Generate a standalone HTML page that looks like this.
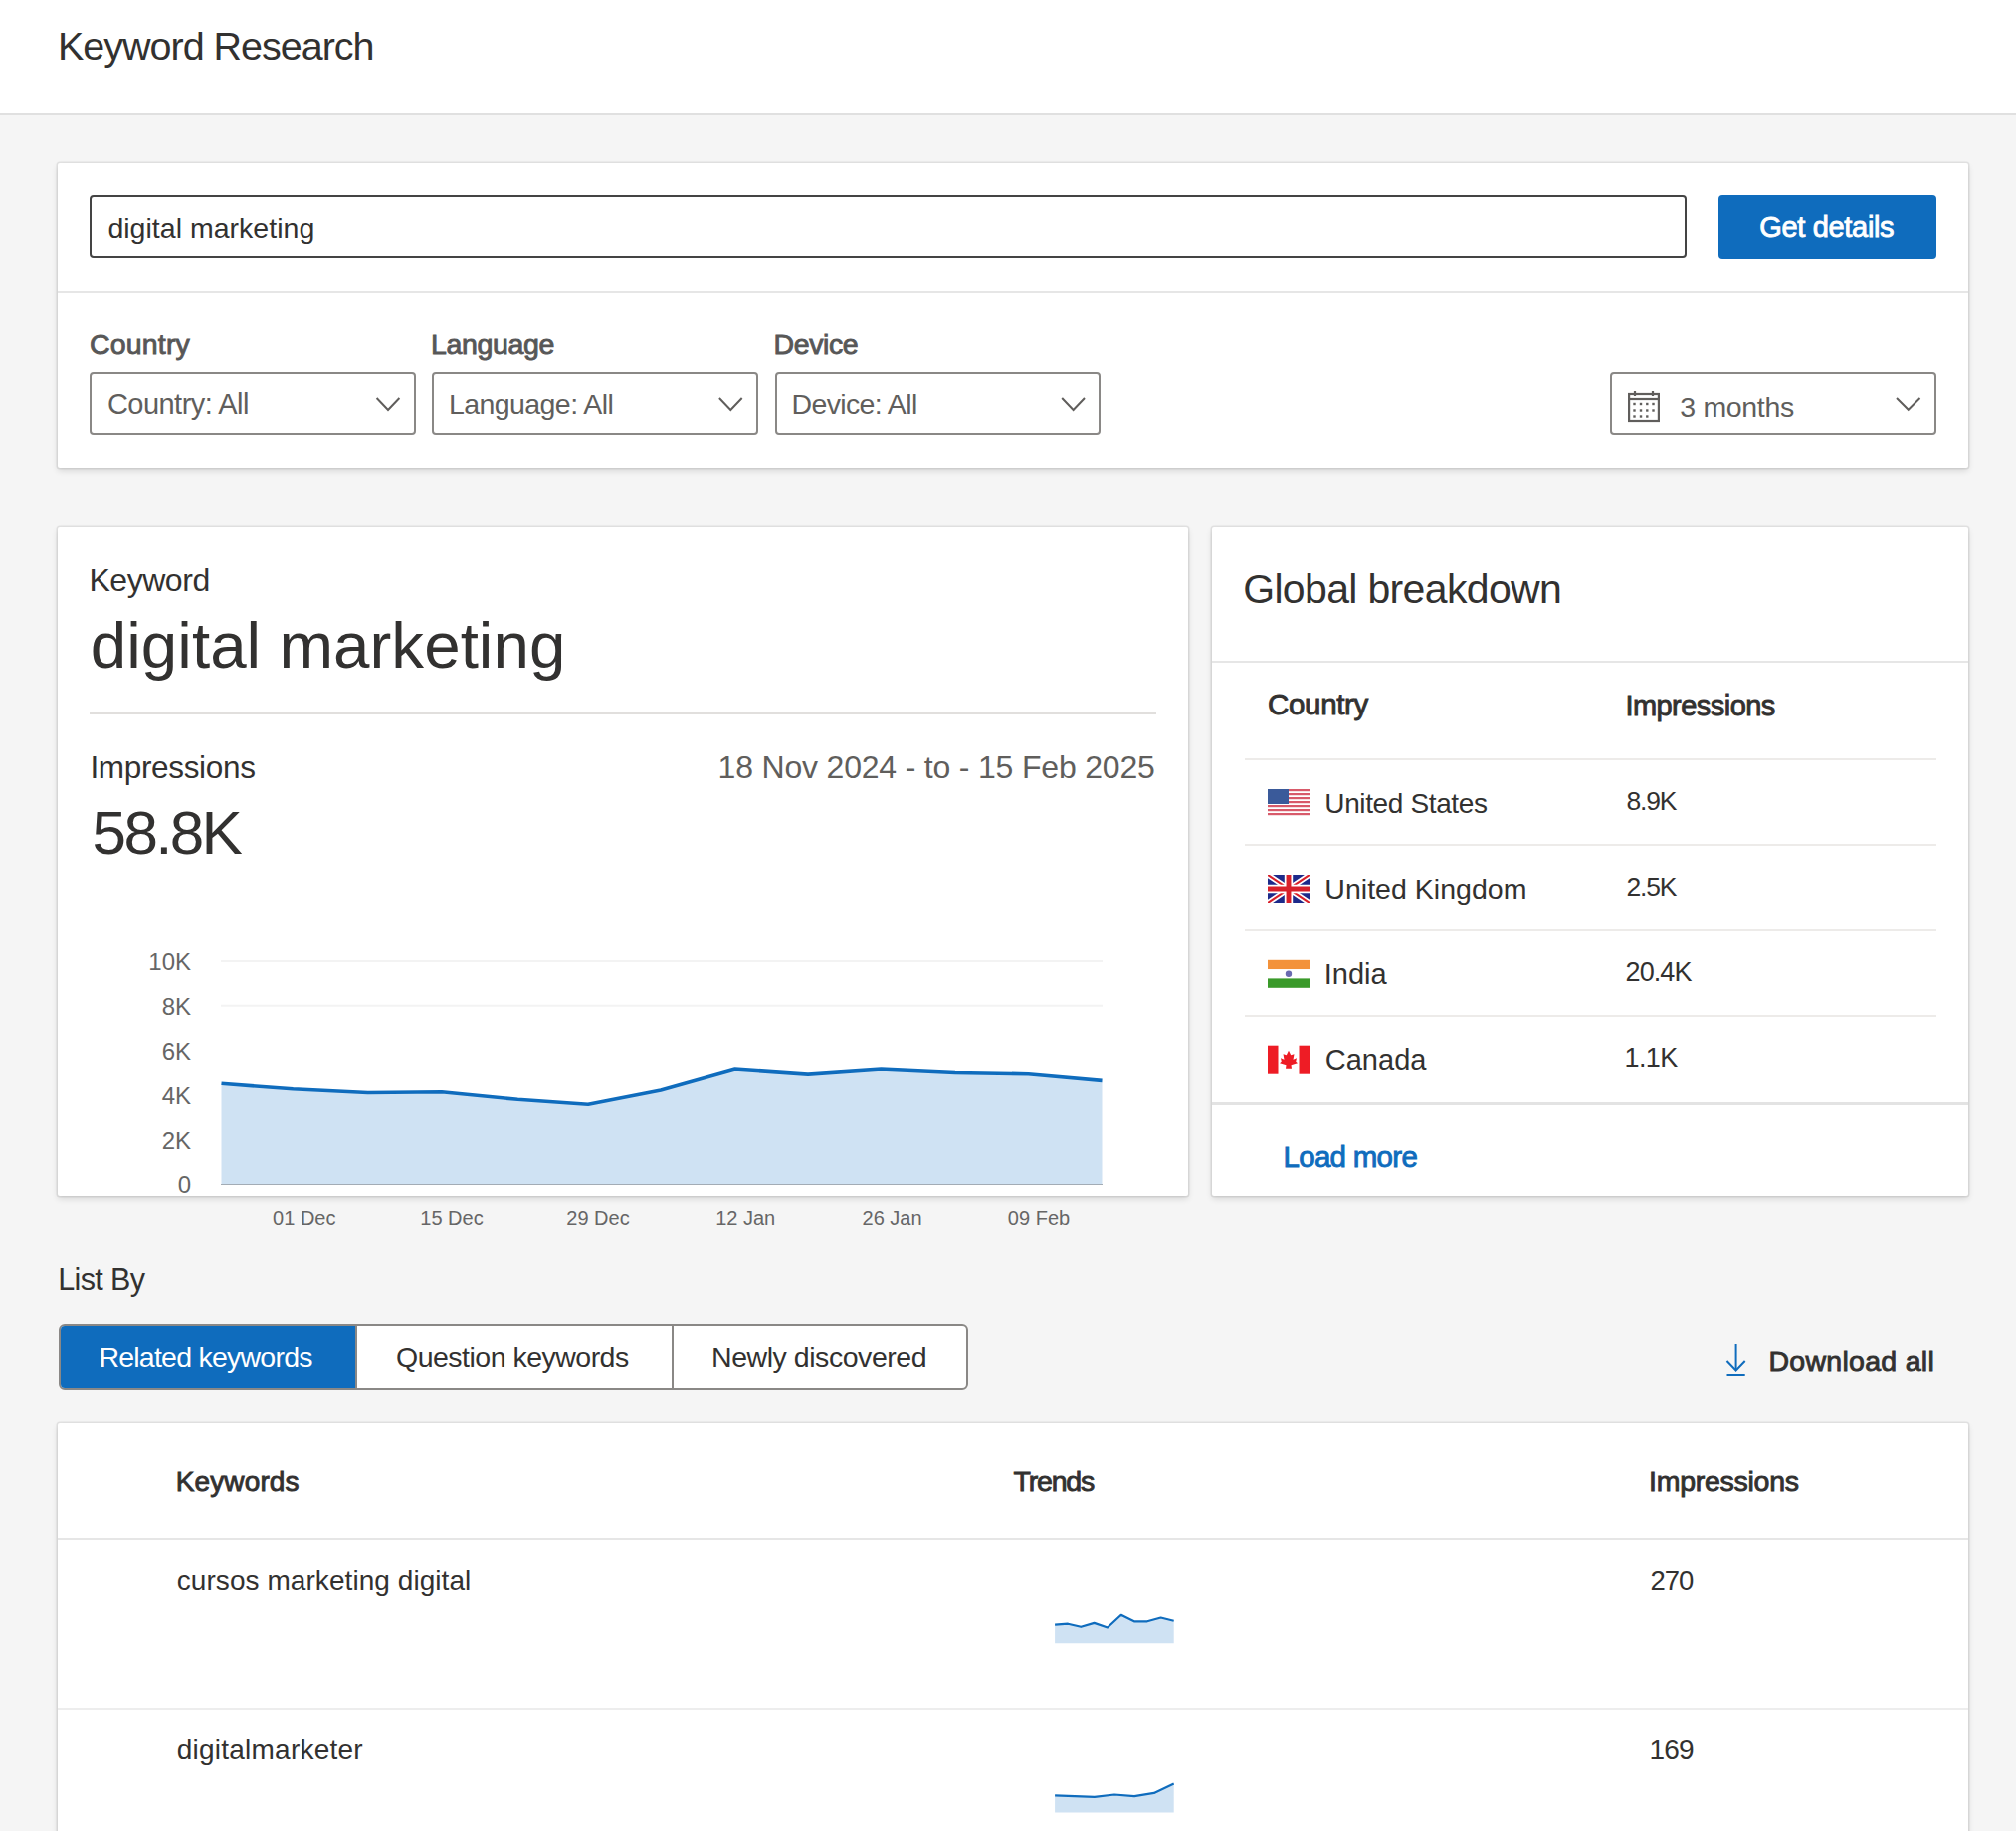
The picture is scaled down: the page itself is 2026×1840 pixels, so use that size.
<!DOCTYPE html>
<html><head><meta charset="utf-8"><title>Keyword Research</title>
<style>
html,body{margin:0;padding:0;background:#f5f5f5;overflow:hidden}
body{width:2026px;height:1840px;overflow:hidden;position:relative;background:#f5f5f5;font-family:"Liberation Sans",sans-serif}
.t{position:absolute;white-space:nowrap}
.b{position:absolute;box-sizing:border-box}
.card{position:absolute;background:#fff;border-radius:2px;box-shadow:0 0 0 1.5px rgba(0,0,0,0.075),0 3px 6px rgba(0,0,0,0.12)}
svg.ov{position:absolute;left:0;top:0;font-family:"Liberation Sans",sans-serif}
</style></head><body>
<div class="b" style="left:0;top:0;width:2026px;height:116px;background:#fff;border-bottom:2px solid #e0e0e0"></div>
<div class="card" style="left:58px;top:164px;width:1920px;height:306px"></div>
<div class="b" style="left:58px;top:292px;width:1920px;height:2px;background:#e6e6e6"></div>
<div class="b" style="left:90px;top:196px;width:1605px;height:63px;border:2px solid #444444;border-radius:4px;background:#fff"></div>
<div class="b" style="left:1727px;top:196px;width:219px;height:64px;background:#0f6cbd;border-radius:4px"></div>
<div class="b" style="left:90px;top:374px;width:327.5px;height:63px;border:2px solid #8a8886;border-radius:4px"></div>
<div class="b" style="left:434.3px;top:374px;width:327.5px;height:63px;border:2px solid #8a8886;border-radius:4px"></div>
<div class="b" style="left:778.6px;top:374px;width:327.5px;height:63px;border:2px solid #8a8886;border-radius:4px"></div>
<div class="b" style="left:1618.4px;top:374px;width:327.5px;height:63px;border:2px solid #8a8886;border-radius:4px"></div>

<div class="card" style="left:58px;top:530px;width:1136px;height:672px"></div>
<div class="b" style="left:90px;top:716px;width:1072px;height:2px;background:#e1dfdd"></div>
<div class="card" style="left:1218px;top:530px;width:760px;height:672px"></div>
<div class="b" style="left:1218px;top:664px;width:760px;height:2px;background:#e6e6e6"></div>
<div class="b" style="left:1250.6px;top:762px;width:695px;height:2px;background:#edebe9"></div>
<div class="b" style="left:1250.6px;top:848px;width:695px;height:2px;background:#edebe9"></div>
<div class="b" style="left:1250.6px;top:934px;width:695px;height:2px;background:#edebe9"></div>
<div class="b" style="left:1250.6px;top:1020px;width:695px;height:2px;background:#edebe9"></div>
<div class="b" style="left:1218px;top:1107px;width:760px;height:2.5px;background:#e3e3e3"></div>

<div class="b" style="left:58.6px;top:1330.7px;width:914.6px;height:66.7px;border:2px solid #8a8886;border-radius:6px;background:#fff;overflow:hidden">
 <div class="b" style="left:0;top:0;width:296px;height:100%;background:#0f6cbd"></div>
 <div class="b" style="left:296px;top:0;width:2px;height:100%;background:#8a8886"></div>
 <div class="b" style="left:614.5px;top:0;width:2px;height:100%;background:#8a8886"></div>
</div>

<div class="card" style="left:58px;top:1430px;width:1920px;height:520px"></div>
<div class="b" style="left:58px;top:1546px;width:1920px;height:2px;background:#e6e6e6"></div>
<div class="b" style="left:58px;top:1716px;width:1920px;height:2px;background:#ededed"></div>

<svg class="ov" width="2026" height="1840" viewBox="0 0 2026 1840">
<line x1="222" x2="1108" y1="965.9" y2="965.9" stroke="#f3f3f3" stroke-width="2"/><line x1="222" x2="1108" y1="1010.8" y2="1010.8" stroke="#f3f3f3" stroke-width="2"/>
<path d="M222.5,1190 L222.5,1088.3 L294.4,1093.8 L369.7,1097.5 L443.9,1096.8 L520.3,1104.3 L591,1109.3 L664,1095 L738.6,1074 L812,1079.1 L885.5,1074 L960,1077.5 L1033.5,1078.7 L1107.5,1085.4 L1107.5,1190 Z" fill="#cfe2f3"/>
<polyline points="222.5,1088.3 294.4,1093.8 369.7,1097.5 443.9,1096.8 520.3,1104.3 591,1109.3 664,1095 738.6,1074 812,1079.1 885.5,1074 960,1077.5 1033.5,1078.7 1107.5,1085.4" fill="none" stroke="#0f6cbd" stroke-width="3.6" stroke-linejoin="round"/>
<line x1="222" x2="1108" y1="1190.5" y2="1190.5" stroke="#a3acb5" stroke-width="1.2"/>
<text x="192" y="975.2" text-anchor="end" font-size="24" fill="#666666">10K</text><text x="192" y="1020" text-anchor="end" font-size="24" fill="#666666">8K</text><text x="192" y="1064.5" text-anchor="end" font-size="24" fill="#666666">6K</text><text x="192" y="1108.8" text-anchor="end" font-size="24" fill="#666666">4K</text><text x="192" y="1154.6" text-anchor="end" font-size="24" fill="#666666">2K</text><text x="192" y="1198.9" text-anchor="end" font-size="24" fill="#666666">0</text><text x="305.8" y="1230.8" text-anchor="middle" font-size="20" fill="#666666">01 Dec</text><text x="454" y="1230.8" text-anchor="middle" font-size="20" fill="#666666">15 Dec</text><text x="601" y="1230.8" text-anchor="middle" font-size="20" fill="#666666">29 Dec</text><text x="749.2" y="1230.8" text-anchor="middle" font-size="20" fill="#666666">12 Jan</text><text x="896.6" y="1230.8" text-anchor="middle" font-size="20" fill="#666666">26 Jan</text><text x="1044" y="1230.8" text-anchor="middle" font-size="20" fill="#666666">09 Feb</text>
<polyline points="378.6,400 390.0,412 401.4,400" fill="none" stroke="#605e5c" stroke-width="2"/><polyline points="722.9,400 734.3,412 745.7,400" fill="none" stroke="#605e5c" stroke-width="2"/><polyline points="1067.2,400 1078.6,412 1090,400" fill="none" stroke="#605e5c" stroke-width="2"/><polyline points="1906,400 1917.75,411.8 1929.5,400" fill="none" stroke="#605e5c" stroke-width="2"/>
<g transform="translate(1636,393)" fill="none" stroke="#605e5c" stroke-width="2.2">
<rect x="1.1" y="3" width="29.8" height="27" />
<line x1="1" y1="8" x2="31" y2="8"/>
<line x1="7" y1="0" x2="7" y2="5"/><line x1="25" y1="0" x2="25" y2="5"/></g>
<g fill="#605e5c"><rect x="1641.3" y="404.8" width="2.4" height="2.4"/><rect x="1647.8" y="404.8" width="2.4" height="2.4"/><rect x="1654.1" y="404.8" width="2.4" height="2.4"/><rect x="1660.3" y="404.8" width="2.4" height="2.4"/><rect x="1641.3" y="411.3" width="2.4" height="2.4"/><rect x="1647.8" y="411.3" width="2.4" height="2.4"/><rect x="1654.1" y="411.3" width="2.4" height="2.4"/><rect x="1660.3" y="411.3" width="2.4" height="2.4"/><rect x="1641.3" y="417.3" width="2.4" height="2.4"/><rect x="1647.8" y="417.3" width="2.4" height="2.4"/><rect x="1654.1" y="417.3" width="2.4" height="2.4"/></g>
<g transform="translate(1274,793)"><rect width="42" height="28" fill="#fff"/><rect y="0" width="42" height="2.2" fill="#d85a6a"/><rect y="4" width="42" height="2.2" fill="#d85a6a"/><rect y="8" width="42" height="2.2" fill="#d85a6a"/><rect y="12" width="42" height="2.2" fill="#d85a6a"/><rect y="16" width="42" height="2.2" fill="#d85a6a"/><rect y="20" width="42" height="2.2" fill="#d85a6a"/><rect y="24" width="42" height="2.2" fill="#d85a6a"/><rect width="21" height="15" fill="#3a5a9a"/></g><g transform="translate(1274,879)"><svg width="42" height="28" viewBox="0 0 60 40" preserveAspectRatio="none"><rect width="60" height="40" fill="#1d2a8a"/>
<path d="M0,0 L60,40 M60,0 L0,40" stroke="#fff" stroke-width="8"/><path d="M0,0 L60,40 M60,0 L0,40" stroke="#d8202a" stroke-width="3"/>
<path d="M30,0 V40 M0,20 H60" stroke="#fff" stroke-width="12"/><path d="M30,0 V40 M0,20 H60" stroke="#d8202a" stroke-width="7"/></svg></g><g transform="translate(1274,964.8)"><rect width="42" height="9.5" fill="#f3923a"/><rect y="9.3" width="42" height="9.5" fill="#fff"/><rect y="18.6" width="42" height="9.4" fill="#3a9a2a"/><circle cx="21" cy="14" r="3.2" fill="#6a6ab0"/></g><g transform="translate(1274,1050.7)"><rect width="42" height="28" fill="#fff"/><rect width="10.5" height="28" fill="#ee1c25"/><rect x="31.5" width="10.5" height="28" fill="#ee1c25"/><path d="M21,5 L23.2,9.5 L26.5,8.5 L25.5,14 L29,12.5 L28.2,16 L30,17.5 L23.5,19.5 L24,23 L18,23 L18.5,19.5 L12,17.5 L13.8,16 L13,12.5 L16.5,14 L15.5,8.5 L18.8,9.5 Z" fill="#ee1c25"/></g>
<g stroke="#0f6cbd" stroke-width="2" fill="none"><line x1="1744.6" y1="1351" x2="1744.6" y2="1377"/><polyline points="1735.5,1368 1744.6,1377.5 1753.7,1368"/><line x1="1735.5" y1="1382" x2="1753.7" y2="1382"/></g>
<path d="M1060.1,1651.2 L1060.1,1632.6 L1073.2,1631.7 L1086.3,1634.8 L1099.6,1630.9 L1113,1635.5 L1126.7,1622.8 L1139.8,1629.3 L1152.9,1629.3 L1166.6,1625.5 L1179.7,1628.8 L1179.7,1651.2 Z" fill="#cfe2f3"/><polyline points="1060.1,1632.6 1073.2,1631.7 1086.3,1634.8 1099.6,1630.9 1113,1635.5 1126.7,1622.8 1139.8,1629.3 1152.9,1629.3 1166.6,1625.5 1179.7,1628.8" fill="none" stroke="#0f6cbd" stroke-width="2.2" stroke-linejoin="round"/><path d="M1060.1,1821.5 L1060.1,1804.4 L1080.1,1805.2 L1099.9,1805.9 L1120,1803.5 L1140,1805.1 L1159.8,1801.9 L1179.7,1792.5 L1179.7,1821.5 Z" fill="#cfe2f3"/><polyline points="1060.1,1804.4 1080.1,1805.2 1099.9,1805.9 1120,1803.5 1140,1805.1 1159.8,1801.9 1179.7,1792.5" fill="none" stroke="#0f6cbd" stroke-width="2.2" stroke-linejoin="round"/>
</svg>
<div class="t" style="left:58.0px;top:24.1px;font-size:39.5px;line-height:44px;font-weight:400;color:#323130;letter-spacing:-1.01px">Keyword Research</div>
<div class="t" style="left:108.4px;top:213.3px;font-size:28.5px;line-height:32px;font-weight:400;color:#323130;letter-spacing:0.02px">digital marketing</div>
<div class="t" style="left:1768.3px;top:212.1px;font-size:29.0px;line-height:32px;font-weight:400;color:#ffffff;letter-spacing:-0.33px;-webkit-text-stroke:0.9px #ffffff">Get details</div>
<div class="t" style="left:90.1px;top:330.0px;font-size:28.5px;line-height:32px;font-weight:400;color:#575757;letter-spacing:0.16px;-webkit-text-stroke:0.9px #575757">Country</div>
<div class="t" style="left:433.0px;top:330.0px;font-size:28.5px;line-height:32px;font-weight:400;color:#575757;letter-spacing:-0.36px;-webkit-text-stroke:0.9px #575757">Language</div>
<div class="t" style="left:777.6px;top:330.0px;font-size:28.5px;line-height:32px;font-weight:400;color:#575757;letter-spacing:-0.41px;-webkit-text-stroke:0.9px #575757">Device</div>
<div class="t" style="left:107.9px;top:390.4px;font-size:29.0px;line-height:32px;font-weight:400;color:#605e5c;letter-spacing:-0.53px">Country: All</div>
<div class="t" style="left:450.9px;top:390.4px;font-size:28.5px;line-height:32px;font-weight:400;color:#605e5c;letter-spacing:-0.57px">Language: All</div>
<div class="t" style="left:795.5px;top:390.4px;font-size:28.5px;line-height:32px;font-weight:400;color:#605e5c;letter-spacing:-0.63px">Device: All</div>
<div class="t" style="left:1688.3px;top:392.9px;font-size:28.5px;line-height:32px;font-weight:400;color:#605e5c;letter-spacing:-0.33px">3 months</div>
<div class="t" style="left:89.4px;top:564.9px;font-size:32.0px;line-height:36px;font-weight:400;color:#323130;letter-spacing:-0.45px">Keyword</div>
<div class="t" style="left:90.8px;top:611.6px;font-size:65.5px;line-height:73px;font-weight:400;color:#323130;letter-spacing:0.04px">digital marketing</div>
<div class="t" style="left:90.4px;top:753.0px;font-size:31.5px;line-height:36px;font-weight:400;color:#323130;letter-spacing:-0.33px">Impressions</div>
<div class="t" style="left:92.6px;top:802.3px;font-size:62.0px;line-height:69px;font-weight:400;color:#323130;letter-spacing:-2.69px">58.8K</div>
<div class="t" style="left:721.6px;top:752.8px;font-size:32.0px;line-height:36px;font-weight:400;color:#605e5c;letter-spacing:-0.19px">18 Nov 2024 - to - 15 Feb 2025</div>
<div class="t" style="left:1249.2px;top:569.3px;font-size:41.0px;line-height:46px;font-weight:400;color:#323130;letter-spacing:-0.66px">Global breakdown</div>
<div class="t" style="left:1274.0px;top:691.4px;font-size:29.5px;line-height:33px;font-weight:400;color:#323130;letter-spacing:-0.32px;-webkit-text-stroke:0.9px #323130">Country</div>
<div class="t" style="left:1633.4px;top:692.6px;font-size:29.0px;line-height:32px;font-weight:400;color:#323130;letter-spacing:-0.54px;-webkit-text-stroke:0.9px #323130">Impressions</div>
<div class="t" style="left:1331.3px;top:791.8px;font-size:28.0px;line-height:31px;font-weight:400;color:#323130;letter-spacing:-0.37px">United States</div>
<div class="t" style="left:1331.3px;top:877.2px;font-size:28.5px;line-height:32px;font-weight:400;color:#323130;letter-spacing:0.03px">United Kingdom</div>
<div class="t" style="left:1330.8px;top:963.3px;font-size:29.0px;line-height:32px;font-weight:400;color:#323130;letter-spacing:0.00px">India</div>
<div class="t" style="left:1331.8px;top:1049.2px;font-size:29.0px;line-height:32px;font-weight:400;color:#323130;letter-spacing:0.00px">Canada</div>
<div class="t" style="left:1634.4px;top:789.8px;font-size:26.5px;line-height:30px;font-weight:400;color:#323130;letter-spacing:-1.15px">8.9K</div>
<div class="t" style="left:1634.4px;top:875.9px;font-size:26.5px;line-height:30px;font-weight:400;color:#323130;letter-spacing:-1.15px">2.5K</div>
<div class="t" style="left:1633.6px;top:962.0px;font-size:27.0px;line-height:30px;font-weight:400;color:#323130;letter-spacing:-0.94px">20.4K</div>
<div class="t" style="left:1632.6px;top:1047.9px;font-size:27.0px;line-height:30px;font-weight:400;color:#323130;letter-spacing:-0.64px">1.1K</div>
<div class="t" style="left:1289.6px;top:1145.5px;font-size:29.5px;line-height:33px;font-weight:400;color:#0f6cbd;letter-spacing:-0.73px;-webkit-text-stroke:0.9px #0f6cbd">Load more</div>
<div class="t" style="left:58.2px;top:1268.2px;font-size:30.5px;line-height:34px;font-weight:400;color:#323130;letter-spacing:-0.63px">List By</div>
<div class="t" style="left:99.4px;top:1348.3px;font-size:28.5px;line-height:32px;font-weight:400;color:#ffffff;letter-spacing:-0.76px">Related keywords</div>
<div class="t" style="left:398.0px;top:1348.3px;font-size:28.5px;line-height:32px;font-weight:400;color:#323130;letter-spacing:-0.51px">Question keywords</div>
<div class="t" style="left:715.0px;top:1348.3px;font-size:28.5px;line-height:32px;font-weight:400;color:#323130;letter-spacing:-0.45px">Newly discovered</div>
<div class="t" style="left:1777.4px;top:1351.8px;font-size:28.5px;line-height:32px;font-weight:400;color:#323130;letter-spacing:0.29px;-webkit-text-stroke:0.9px #323130">Download all</div>
<div class="t" style="left:176.8px;top:1473.1px;font-size:28.0px;line-height:31px;font-weight:400;color:#323130;letter-spacing:0.11px;-webkit-text-stroke:0.9px #323130">Keywords</div>
<div class="t" style="left:1018.6px;top:1472.0px;font-size:28.5px;line-height:32px;font-weight:400;color:#323130;letter-spacing:-1.20px;-webkit-text-stroke:0.9px #323130">Trends</div>
<div class="t" style="left:1657.0px;top:1472.4px;font-size:28.5px;line-height:32px;font-weight:400;color:#323130;letter-spacing:-0.26px;-webkit-text-stroke:0.9px #323130">Impressions</div>
<div class="t" style="left:177.8px;top:1573.1px;font-size:28.0px;line-height:31px;font-weight:400;color:#323130;letter-spacing:0.06px">cursos marketing digital</div>
<div class="t" style="left:177.8px;top:1743.3px;font-size:28.0px;line-height:31px;font-weight:400;color:#323130;letter-spacing:0.23px">digitalmarketer</div>
<div class="t" style="left:1658.4px;top:1573.0px;font-size:27.5px;line-height:31px;font-weight:400;color:#323130;letter-spacing:-0.99px">270</div>
<div class="t" style="left:1657.4px;top:1743.2px;font-size:28.0px;line-height:31px;font-weight:400;color:#323130;letter-spacing:-0.82px">169</div>
</body></html>
